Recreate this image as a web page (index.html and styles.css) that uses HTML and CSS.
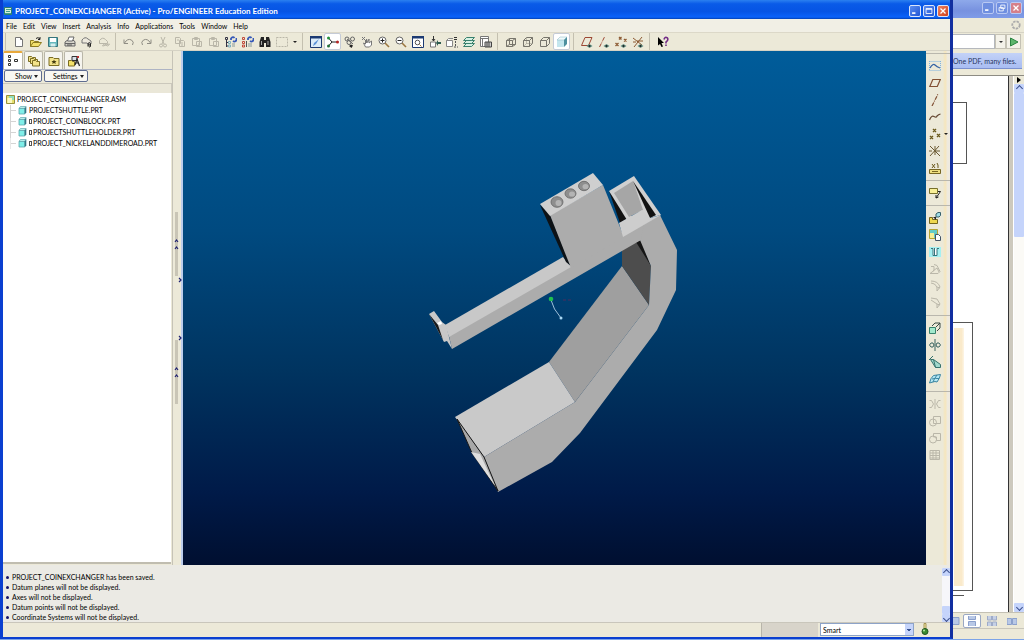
FILE: index.html
```html
<!DOCTYPE html>
<html lang="en">
<head>
<meta charset="utf-8">
<title>PROJECT_COINEXCHANGER (Active) - Pro/ENGINEER Education Edition</title>
<link rel="stylesheet" href="styles.css">
</head>
<body>
<svg class="defs" aria-hidden="true">
  <symbol id="eye" viewBox="0 0 6 4"><path class="f-teal" d="M0 2 3 0 6 2 3 4z"/><circle class="f-dark" cx="3" cy="2" r="1"/></symbol>
  <symbol id="part" viewBox="0 0 9 9"><path fill="#7feee8" stroke="#5fa9b0" stroke-width=".8" d="M1 2.500h5.500V8H1z"/><path fill="#c8fbf5" stroke="#4b99a3" stroke-width=".6" d="m1 2.300 1.500-1.800H8L6.500 2.300z"/><path fill="#2f7a88" d="M6.700 2.300 8.300.5v6L6.700 8.500z"/></symbol>
</svg>
<div class="desktop">
<main class="app">
  <header class="title">
    <svg class="logo" viewBox="0 0 8 8"><path fill="#d8f0d8" stroke="#2c7f70" d="M.5.5h7v7h-7z"/><path fill="#3f9d8c" d="M2 2h5v1H2zM2 4h4v1H2zM1 6h6v1H1z"/></svg>
    <h1>PROJECT_COINEXCHANGER (Active) - Pro/ENGINEER Education Edition</h1>
    <button class="win" aria-label="Minimize"><svg viewBox="0 0 12 12"><path d="M2.500 8.500h4" stroke-width="2"/></svg></button>
    <button class="win" aria-label="Maximize"><svg viewBox="0 0 12 12"><path d="M2.500 3h7v6h-7zM2.500 4h7"/></svg></button>
    <button class="win close" aria-label="Close"><svg viewBox="0 0 12 12"><path d="m3 3 6 6M9 3 3 9" stroke-width="1.500"/></svg></button>
  </header>
  <nav class="menu">
    <button>File</button><button>Edit</button><button>View</button><button>Insert</button><button>Analysis</button><button>Info</button><button>Applications</button><button>Tools</button><button>Window</button><button>Help</button>
  </nav>
  <div class="toolbar">
    <div class="group">
      <button class="tool" aria-label="New"><svg viewBox="0 0 12 12"><path class="w" stroke="#777" d="M2.500 1.500h5l2 2v7h-7zM7.500 1.500v2h2"/></svg></button>
      <button class="tool" aria-label="Open"><svg viewBox="0 0 12 12"><path fill="#f4e16c" stroke="#8d7b20" d="M.5 10.500V4.500h3l1 1h4v1.500M.5 10.500l2.500-4h8.500l-3 4z"/><path stroke="#222" d="M6 2.500q2-2 4 .5M10 1v2.500H8"/></svg></button>
      <button class="tool" aria-label="Save"><svg viewBox="0 0 12 12"><path fill="#66b8bd" stroke="#36747c" d="M1.500 1.500h9v9h-9z"/><path class="w" d="M3 2h6v4H3z"/><path fill="#d5eeee" d="M3.500 7.500h5v3h-5z"/></svg></button>
      <button class="tool" aria-label="Print"><svg viewBox="0 0 12 12"><path fill="#d8d6cc" stroke="#666" d="M1 6l2-1.500h7l1 1.500v4H1zM1 7.500h10"/><path class="w" stroke="#666" d="M3.500 5 5 1h5L8.500 5z"/><path stroke="#555" d="M3 9h5"/></svg></button>
      <button class="tool" aria-label="Mail"><svg viewBox="0 0 12 12"><path fill="#eeeade" stroke="#777" d="M1 7V4q3-4 6-1l3 2v3H7L6 7z"/><path stroke="#222" d="M7 10.500V7.500q1.500-2 2.500 0v3q-1 1-1.500 0V8"/></svg></button>
      <button class="tool off" aria-label="Mail link"><svg viewBox="0 0 12 12"><path d="M1.500 7.500v-3q3-4 6-1l2 2v2h-8M5 9q2-2 3 0t3 0-3 0-3 0"/></svg></button>
    </div>
    <div class="group">
      <button class="tool off dim" aria-label="Undo"><svg viewBox="0 0 12 12"><path d="M1 3.500v4h4M1.500 7q3-5 7-3 3 2 1 5"/></svg></button>
      <button class="tool off dim" aria-label="Redo"><svg viewBox="0 0 12 12"><path d="M11 3.500v4H7M10.500 7q-3-5-7-3-3 2-1 5"/></svg></button>
      <button class="tool off" aria-label="Cut"><svg viewBox="0 0 12 12"><path d="M4 1l3 7M8 1 5 8"/><circle cx="4" cy="9.500" r="1.500"/><circle cx="8" cy="9.500" r="1.500"/></svg></button>
      <button class="tool off" aria-label="Copy"><svg viewBox="0 0 12 12"><path d="M1.500 1.500h4l1 1v5h-5zM5.500 4.500h4l1 1v5h-5zM7 7h2M7 9h2M3 4h2"/></svg></button>
      <button class="tool off" aria-label="Paste"><svg viewBox="0 0 12 12"><path d="M1.500 2.500h7v7h-7zM3.500 1.500h3v2h-3zM5.500 5.500h5v5h-5zM7 8h2"/></svg></button>
      <button class="tool off" aria-label="Paste special"><svg viewBox="0 0 12 12"><path d="M1.500 2.500h7v7h-7zM3.500 1.500h3v2h-3zM5.500 5.500h5v5h-5z"/></svg></button>
      <button class="tool" aria-label="Regenerate"><svg viewBox="0 0 12 12"><path stroke="#334" d="M.5 1.500h2v2h-2zM1.500 4v7M1.500 6.500h2M1.500 10h2"/><path stroke="#7cb0c0" d="M3.500 5.500h2v2h-2zM3.500 9h2v2h-2z"/><path stroke="#3558b8" stroke-width="1.800" d="M6 4V2.500Q8 0 9.500 2M11.500 2v2Q10 6.500 8 5"/><path stroke="#8a9a9a" d="M7 8h3M7 10h3"/></svg></button>
      <button class="tool" aria-label="Regenerate manager"><svg viewBox="0 0 12 12"><path stroke="#c24a3a" d="M.5 1.500h2v2h-2zM.5 5.500h2v2h-2zM.5 9h2v2h-2z"/><path stroke="#555" d="M4.500 5v6"/><path stroke="#3558b8" stroke-width="1.800" d="M6 4V2.500Q8 0 9.500 2M11.500 2v2Q10 6.500 8 5"/><path stroke="#8a9a9a" d="M6 8h4M6 10h4"/></svg></button>
      <button class="tool" aria-label="Find"><svg viewBox="0 0 12 12"><path class="f-dark" d="M2 1h3v3h2V1h3l1.500 5v5H7V7H5v4H.5V6z"/><path stroke="#ddd" stroke-width=".7" d="M2.500 5v4M9 5v4"/></svg></button>
      <button class="tool off" aria-label="Select box"><svg viewBox="0 0 12 12"><path stroke-dasharray="2 1" d="M.5 1.500h11v9H.5z"/></svg></button>
      <button class="more" aria-label="Selection options"></button>
    </div>
    <div class="group">
      <button class="tool" aria-label="Repaint"><svg viewBox="0 0 12 12"><path fill="#dcecf8" stroke="#1c3a72" d="M.5.5h11v11H.5z"/><path fill="#1c3a72" d="M0 0h12v2.500H0z"/><path fill="#5b92d8" d="M3 10l1-3 5-4-3 5z"/></svg></button>
      <button class="tool on" aria-label="Spin center"><svg viewBox="0 0 12 12"><path stroke="#222" d="M1.500 2 5 6 1.500 10M5 6h5"/><circle fill="#24933a" cx="1.500" cy="2" r="1.500"/><circle fill="#24733a" cx="1.500" cy="10" r="1.500"/><circle fill="#b62424" cx="10.500" cy="6" r="1.500"/></svg></button>
      <button class="tool" aria-label="Orient mode"><svg viewBox="0 0 12 12"><g stroke="#666"><circle cx="3" cy="3" r="2"/><circle cx="8.500" cy="3" r="2"/><circle cx="5" cy="6.500" r="2"/><path d="M3 3l6 5"/></g><path class="f-dark" d="M5 10l2-1.500 2 1L7.500 12z"/></svg></button>
      <button class="tool" aria-label="Pan"><svg viewBox="0 0 12 12"><path stroke="#777" d="M1 1l3 3M1 4l3-3"/><path fill="#fff" stroke="#777" d="M4.500 11 2.500 7l2 1V4l1 3V3l1 3.500L8 3v4l2.500-2v4l-2 2z"/></svg></button>
      <button class="tool" aria-label="Zoom in"><svg viewBox="0 0 12 12"><circle class="w" stroke="#666" cx="4.500" cy="4.500" r="3.500"/><path stroke="#222" d="M2.500 4.500h4M4.500 2.500v4"/><path stroke="#9b7740" stroke-width="1.600" d="m7 7 4 4"/></svg></button>
      <button class="tool" aria-label="Zoom out"><svg viewBox="0 0 12 12"><circle class="w" stroke="#666" cx="4.500" cy="4.500" r="3.500"/><path stroke="#222" d="M2.500 4.500h4"/><path stroke="#9b7740" stroke-width="1.600" d="m7 7 4 4"/></svg></button>
      <button class="tool" aria-label="Refit"><svg viewBox="0 0 12 12"><path class="w" stroke="#1c3a72" d="M.5.5h11v11H.5z"/><path fill="#1c3a72" d="M0 0h12v2.500H0z"/><circle stroke="#555" cx="5.500" cy="6.500" r="2.300"/><path stroke="#9b7740" d="m7.500 8.500 2 2"/></svg></button>
      <button class="tool" aria-label="Reorient"><svg viewBox="0 0 12 12"><path stroke="#333" d="M4.500 0v5M3 3l1.500 2L6 3"/><path class="w" stroke="#777" d="M1.500 6h5v5h-5z"/><path fill="#2e5c50" d="M7 7l2-3v2h3v2H9v2z"/></svg></button>
      <button class="tool" aria-label="Saved views"><svg viewBox="0 0 12 12"><path class="w" stroke="#888" d="M.5 4.500h6v6h-6zM.5 4.500l2-2H7"/><path stroke="#333" d="M8 1.500h3M8 3.500h3"/><path stroke="#555" stroke-dasharray="2 1" d="M9.500 5v5M8 11h4"/></svg></button>
      <button class="tool" aria-label="Layers"><svg viewBox="0 0 12 12"><g fill="#d5f0e2" stroke="#39806d"><path d="M.5 10.500l3-3h8l-3 3z"/><path d="M.5 7.500l3-3h8l-3 3z"/><path d="M.5 4.500l3-3h8l-3 3z"/></g></svg></button>
      <button class="tool" aria-label="View manager"><svg viewBox="0 0 12 12"><path class="w" stroke="#777" d="M.5.5h8v10h-8zM.5 2.500h8M2.500 2.500v8"/><path fill="#ccc" stroke="#444" d="M5 6h6.500v5H5zM7 6v5M9 6v5"/></svg></button>
    </div>
    <div class="group">
      <button class="tool" aria-label="Wireframe"><svg class="cube" viewBox="0 0 12 12"><path d="M1.500 4.500h6v6h-6zM4.500 2.500h6v6h-6zM1.500 4.500l3-2M7.500 4.500l3-2M7.500 10.500l3-2M1.500 10.500l3-2"/></svg></button>
      <button class="tool" aria-label="Hidden line"><svg class="cube" viewBox="0 0 12 12"><path d="M1.500 4.500h6v6h-6zM1.500 4.500l3-3h6l-3 3M10.500 1.500v6l-3 3"/><path opacity=".4" d="M4.500 2v5.500H10M1.500 10.500l3-3"/></svg></button>
      <button class="tool" aria-label="No hidden"><svg class="cube" viewBox="0 0 12 12"><path d="M1.500 4.500h6v6h-6zM1.500 4.500l3-3h6l-3 3M10.500 1.500v6l-3 3"/></svg></button>
      <button class="tool on" aria-label="Shading"><svg viewBox="0 0 12 12"><path fill="#c4e6ee" d="M1 4h7v7H1z"/><path fill="#eefafc" stroke="#89b6c0" stroke-width=".5" d="m1 4 3-3h7L8 4z"/><path fill="#4c8f9e" d="m8 4 3-3v7l-3 3z"/></svg></button>
    </div>
    <div class="group">
      <button class="tool" aria-label="Planes on"><svg viewBox="0 0 12 12"><path stroke="#9c4733" d="M.5 9.500l3.500-8h7l-3.500 8z"/><use href="#eye" x="5" y="8" width="7" height="4"/></svg></button>
      <button class="tool" aria-label="Axes on"><svg viewBox="0 0 12 12"><path stroke="#9c4733" stroke-dasharray="4 1 1 1" d="M1.500 11 6.500 1"/><use href="#eye" x="5" y="8" width="7" height="4"/></svg></button>
      <button class="tool" aria-label="Points on"><svg viewBox="0 0 12 12"><path stroke="#8c5a33" stroke-width="1.300" d="M4 1l2.500 2.500M6.500 1 4 3.500M9 3l2.500 2.500M11.500 3 9 5.500M.5 7l3 3M3.500 7l-3 3"/><use href="#eye" x="5" y="8" width="7" height="4"/></svg></button>
      <button class="tool" aria-label="Coordinate systems on"><svg viewBox="0 0 12 12"><path stroke="#8c5a33" d="M1 2l9 7M10 1 2 11M5 5h6M1 6h3"/><use href="#eye" x="5" y="8" width="7" height="4"/></svg></button>
    </div>
    <div class="group">
      <button class="tool" aria-label="Context help"><svg viewBox="0 0 12 12"><path fill="#000" d="M1 1l6 6H4.500L6 10.500 4.500 11 3 8 1 9.500z"/><path stroke="#722b86" stroke-width="1.600" d="M7 3.500Q7.500 1 9.500 1.500t1 3L9 6v1.500M9 8.500V10"/></svg></button>
    </div>
  </div>

  <div class="work">
    <aside class="panel">
      <div class="tabs">
        <button class="tab active" aria-label="Model tree"><svg viewBox="0 0 12 12"><path class="w" stroke="#333" d="M1.500.5h2v2h-2zM1.500 4.500h2v2h-2zM1.500 8.500h2v2h-2zM7.500 4.500h3v2h-3z"/></svg></button>
        <button class="tab" aria-label="Folder browser"><svg viewBox="0 0 12 12"><g fill="#f3e38a" stroke="#7b6d24"><path d="M.5 1.500h3l1 1h3v4h-7z"/><path d="M2.500 3.500h3l1 1h3v4h-7z"/><path d="M4.500 5.500h3l1 1h3v4.500h-7z"/></g></svg></button>
        <button class="tab" aria-label="Favorites"><svg viewBox="0 0 12 12"><path fill="#f3e38a" stroke="#7b6d24" d="M1 2.500h4l1 1h5v7H1z"/><path fill="#443c10" d="M6 4.500l.7 1.500H8.500L7.300 7.300l.4 1.700L6 8l-1.700 1 .4-1.700L3.500 6h1.800z"/></svg></button>
        <button class="tab" aria-label="Connections"><svg viewBox="0 0 12 12"><path fill="#d8e0e8" stroke="#333" d="M4 1.500h5v4H4z"/><path fill="#f3e16a" stroke="#7b6d24" d="M.5 5.500h3l1 1h2v4.500h-6z"/><path stroke="#222" stroke-width="1.200" d="M7 10l2-6 2.500 7M8 8h3"/><path fill="#b33" d="M9 1h2v2H9z"/></svg></button>
      </div>
      <div class="actions"><button>Show <i class="caret"></i></button><button>Settings <i class="caret"></i></button></div>
      <div class="strip"></div>
      <div class="tree">
        <div class="root"><svg viewBox="0 0 9 9"><path fill="#e5df6d" stroke="#96903e" d="M.5.5h8v8h-8z"/><path fill="#8fe0c0" d="M3 1h5v4H3z"/><path fill="#fbf8c0" d="M1.500 3h4.500v5H1.500z"/></svg>PROJECT_COINEXCHANGER.ASM</div>
        <ul>
          <li><svg><use href="#part"/></svg>PROJECTSHUTTLE.PRT</li>
          <li><svg><use href="#part"/></svg><i class="pack"></i>PROJECT_COINBLOCK.PRT</li>
          <li><svg><use href="#part"/></svg><i class="pack"></i>PROJECTSHUTTLEHOLDER.PRT</li>
          <li><svg><use href="#part"/></svg><i class="pack"></i>PROJECT_NICKELANDDIMEROAD.PRT</li>
        </ul>
      </div>
    </aside>
    <div class="split">
      <svg viewBox="0 0 8 192"><path fill="#c9c5b6" d="M1 0h3v64H1zM1 128h3v64H1z"/><path stroke="#1d2070" stroke-width="1.200" d="m1 30 1.500-2L4 30M1 37l1.500-2L4 37M1 158l1.500-2L4 158M1 165l1.500-2L4 165M5 66l2 2-2 2M5 124l2 2-2 2"/></svg>
    </div>
    <section class="view">
      <svg viewBox="183 51 743 514" role="img" aria-label="Coin exchanger assembly">
        <path fill="#9f9f9f" d="M549 362 622 266 649 305 575 402z"/>
        <path fill="#4d4d4d" d="M622 248 640 240 651 266 649 305 622 266z"/>
        <path fill="#151515" d="M636 242 641 240 651 266z"/>
        <path fill="#acacac" d="M619 238 660 215 677 250 676 290 657 330 580 433 552 462 498 492 484 457 575 402 649 305 651 266 640 240 623 249z"/>
        <path fill="#c9c9c9" d="M455 417 549 362 575 402 484 457z"/>
        <path fill="#a8a8a8" stroke="#171717" d="M457 419 484 457 498 491 472 453z"/>
        <path fill="#dedede" d="M471 452 480 454 495 486z"/>
        <path fill="#acacac" d="M449 336 571 264 623 232 644 223 641 240 452 349z"/>
        <path fill="#c8c8c8" d="M445 325 563 257 571 267 449 337z"/>
        <path fill="#0d1216" d="M540 205 550 214 571 266 566 262z"/>
        <path fill="#acacac" d="M550 215 603 185 624 237 571 268z"/>
        <path fill="#cfcfcf" d="M540 204 593 173 603 185 550 216z"/>
        <g fill="#8e8e8e" stroke="#666" stroke-width=".8"><ellipse cx="557" cy="202" rx="6" ry="5.300"/><ellipse cx="570.500" cy="193.500" rx="5.500" ry="4.700"/><ellipse cx="584" cy="186" rx="5.500" ry="4.700"/></g>
        <g fill="#b4b4b4"><ellipse cx="558.500" cy="203" rx="3" ry="3"/><ellipse cx="572" cy="194" rx="3" ry="2.600"/><ellipse cx="585.500" cy="186.500" rx="3" ry="2.600"/></g>
        <path fill="#d0d0d0" d="M609 191 634 176 661 215 649 218z"/>
        <path fill="#121212" d="M609 191 628 218 620 223z"/>
        <path fill="#d0d0d0" d="M609 191 615 192 632 217 627 220z"/>
        <path fill="#a6a6a6" d="M614 193 633 181 643 210 629 217z"/>
        <path fill="#111" d="M633 181 656 215 650 218z"/>
        <path fill="#cdcdcd" d="M619 223 642 210 650 218 661 215 623 237z"/>
        <path fill="#c8c8c8" d="M429 314 434 311 442 322 446 325 449 337 452 349 447 341 444 342z"/>
        <path fill="#17191b" d="M429 314 438 325 443 340z"/><path fill="#fff" d="M437 323 441 321 442 324 439 325z"/>
        <path stroke="#9fc0da" d="M551 300q2 9 10 18"/><path stroke="#4c2c5c" stroke-dasharray="3 2" d="M563 300h8"/>
        <circle fill="#20c050" cx="551" cy="299" r="2.300"/><circle fill="#a8d8f4" cx="561" cy="318" r="1.500"/>
      </svg>
    </section>
    <div class="side">
      <div class="vgroup">
        <button class="tool" aria-label="Sketch"><svg viewBox="0 0 12 12"><path stroke="#7eb3e0" stroke-dasharray="1 1" d="M.5 1.500h11M.5 10.500h11M.5 1v10M11.500 1v10"/><path stroke="#3563a4" stroke-width="1.300" d="M1 8q3-5 5-3t5 3"/></svg></button>
        <button class="tool" aria-label="Plane"><svg viewBox="0 0 12 12"><path stroke="#815033" stroke-width="1.200" d="M.8 9.500l3-7h7.500l-3 7z"/></svg></button>
        <button class="tool" aria-label="Axis"><svg viewBox="0 0 12 12"><path stroke="#815033" stroke-width="1.200" stroke-dasharray="4 1 1 1" d="M3 12 9 0"/></svg></button>
        <button class="tool" aria-label="Curve"><svg viewBox="0 0 12 12"><path stroke="#654832" stroke-width="1.200" d="M.5 9q2-5 4.500-3.500T8 5q1.500-1.500 3.500-2"/></svg></button>
        <div class="row"><button class="tool" aria-label="Point"><svg viewBox="0 0 12 12"><path stroke="#6b5a1d" stroke-width="1.400" d="M4 1l3 3M7 1 4 4M1 8l3 3M4 8l-3 3M8 6l3 3M11 6 8 9"/></svg></button><button class="fly" aria-label="Point types"></button></div>
        <button class="tool" aria-label="Coordinate system"><svg viewBox="0 0 12 12"><path stroke="#6b5a33" d="M1 1l10 10M10 1 1 11M6 1v9M5 6h6M0 6h3"/></svg></button>
        <button class="tool" aria-label="Analysis feature"><svg viewBox="0 0 12 12"><path fill="#efdf80" stroke="#776723" d="M.5 7.500h11v4H.5zM3 9.500h6"/><path stroke="#6b5a1d" d="M3 2l3 4M6 2 3 6M8 1l1 2v3"/></svg></button>
      </div>
      <div class="vgroup">
        <button class="tool" aria-label="Annotation"><svg viewBox="0 0 12 12"><path fill="#f8ef96" stroke="#77702b" d="M.5 1.500h8v5h-8z"/><path stroke="#222" d="M9 4.500h2.500L7 11M7 8v3l2.500-1"/></svg></button>
      </div>
      <div class="vgroup">
        <button class="tool" aria-label="Assemble"><svg viewBox="0 0 12 12"><path fill="#efd84f" stroke="#75661c" d="M.5 5.500h3v2h5v4h-8z"/><path fill="#9fdce5" stroke="#37606b" d="M7 2l2-1.500h2.500v3L10 5H7z"/><path class="f-dark" d="M4 5h3v3z"/></svg></button>
        <button class="tool" aria-label="Create component"><svg viewBox="0 0 12 12"><path fill="#65cbc8" stroke="#b5a433" d="M.5.5h8v9h-8z"/><path fill="#f8ef96" d="M1 4h4v5H1z"/><path class="w" stroke="#456" d="M6.500 5.500h3l2 2v4h-5z"/></svg></button>
        <button class="tool" aria-label="Hole"><svg viewBox="0 0 12 12"><path fill="#a5f0f0" d="M0 1h12v10H0z"/><path class="w" stroke="#36747c" d="M2 2.500h2v7h4v-7h2M5.500 2v7"/></svg></button>
        <button class="tool off" aria-label="Shell"><svg viewBox="0 0 12 12"><path d="M1 10.500h8l2-2-3-6-3-1M1 10.500l4-3V3.500H2M4 8l4-3 2 4"/></svg></button>
        <button class="tool off" aria-label="Round"><svg viewBox="0 0 12 12"><path d="M2 1q7 0 9 6l-3 4q1-7-6-8M8 7l3 1"/></svg></button>
        <button class="tool off" aria-label="Chamfer"><svg viewBox="0 0 12 12"><path d="M2 1l6 1 3 5-3 4V7L2 3M8 7l3 1"/></svg></button>
      </div>
      <div class="vgroup">
        <button class="tool" aria-label="Extrude"><svg viewBox="0 0 12 12"><path fill="#a2e9cc" stroke="#37826c" d="M.5 5.500h6v6h-6z"/><path stroke="#3a4a45" d="M3 4l3-3h5v5L8 9M7 5l4-4"/></svg></button>
        <button class="tool" aria-label="Revolve"><svg viewBox="0 0 12 12"><path stroke="#3a6460" d="M6 0v12M4 4H2L.5 6 2 8h2l1-2zM8 4h2l1.500 2L10 8H8L7 6z"/></svg></button>
        <button class="tool" aria-label="Sweep"><svg viewBox="0 0 12 12"><path fill="#a2d9cc" stroke="#37726c" d="M1.500 3.500h3l7 5v3h-5z"/><path stroke="#37726c" d="M0 4l4-4M4.500 3.500l2 8"/></svg></button>
        <button class="tool" aria-label="Boundary blend"><svg viewBox="0 0 12 12"><path fill="#b6e8f5" stroke="#3985a1" d="M.5 10q1-5 4-7.500l7-1Q11 5 8 9q-2-1-4 0zM3 6q3-1 7-.5M8 2Q5 6 4 9"/></svg></button>
      </div>
      <div class="vgroup">
        <button class="tool off" aria-label="Mirror"><svg viewBox="0 0 12 12"><path d="M6 1v10M.5 2.500h2l2 3.500-2 3.500h-2M11.500 2.500h-2L7.500 6l2 3.500h2"/></svg></button>
        <button class="tool off" aria-label="Merge"><svg viewBox="0 0 12 12"><circle cx="4" cy="7.500" r="3.500"/><path d="M4.500 1.500h7v7h-7z"/></svg></button>
        <button class="tool off" aria-label="Trim"><svg viewBox="0 0 12 12"><circle cx="4" cy="7.500" r="3.500"/><path d="M4.500 1.500h7v7h-4V5h-3z"/></svg></button>
        <button class="tool off" aria-label="Pattern"><svg viewBox="0 0 12 12"><path d="M1 1.500h9.500v9H1zM1 4h9M1 6.500h9M1 9h9M4 2v9M7 2v9"/></svg></button>
      </div>
    </div>
  </div>

  <div class="messages">
    <ul>
      <li>PROJECT_COINEXCHANGER has been saved.</li>
      <li>Datum planes will not be displayed.</li>
      <li>Axes will not be displayed.</li>
      <li>Datum points will not be displayed.</li>
      <li>Coordinate Systems will not be displayed.</li>
    </ul>
    <div class="scroll"><button class="arrow up" aria-label="Scroll up"></button><span class="space"></span><span class="thumb"></span><button class="arrow down" aria-label="Scroll down"></button></div>
  </div>
  <footer class="status">
    <span class="cell"></span>
    <select aria-label="Selection filter"><option>Smart</option></select>
    <svg class="light" viewBox="0 0 8 13"><path stroke="#a79655" fill="#efe6a5" d="M3 .5h2v5H3z"/><circle fill="#3c8b30" stroke="#1f5520" cx="4" cy="8.500" r="3"/><circle fill="#b2eba0" cx="3" cy="7.500" r="1"/></svg>
  </footer>
</main>

<aside class="reader">
  <header class="title">
    <button class="win" aria-label="Minimize reader"><svg viewBox="0 0 12 12"><path d="M2.500 8.500h4" stroke-width="2"/></svg></button>
    <button class="win" aria-label="Restore reader"><svg viewBox="0 0 12 12"><path d="M4.500 2.500h5v4h-5zM2.500 5.500h5v4h-5z"/></svg></button>
    <button class="win close" aria-label="Close reader"><svg viewBox="0 0 12 12"><path d="m3 3 6 6M9 3 3 9" stroke-width="1.500"/></svg></button>
  </header>
  <div class="rmenu"><svg viewBox="0 0 10 10"><circle stroke="#aaa" stroke-width="1.800" stroke-dasharray="2.500 1" cx="5" cy="5" r="3.700"/></svg></div>
  <div class="address"><input type="text" aria-label="Address"><button class="drop" aria-label="Address list"></button><button class="go" aria-label="Go"><svg viewBox="0 0 10 10"><path fill="#5db66c" stroke="#2b8441" d="M1.500 1 9 5 1.500 9z"/></svg></button></div>
  <div class="banner"><a href="#pdf">One PDF, many files.</a></div>
  <div class="doc">
    <div class="page"><div class="frame"></div><div class="figure"><div class="tint"></div></div><div class="rule"></div></div>
    <div class="rscroll"><button class="flag" aria-label="Expand"></button><button class="arrow up" aria-label="Page up"></button><span class="thumb"></span><span class="space"></span><button class="arrow down" aria-label="Page down"></button></div>
  </div>
  <div class="layouts">
    <button class="cut" aria-label="Single page"><svg viewBox="0 0 10 10"><path fill="#b8c8e6" stroke="#8ba0cc" d="M-3 1.500h9v7h-9z"/></svg></button>
    <button class="sel" aria-label="Continuous"><svg viewBox="0 0 10 10"><path fill="#b8c8e6" stroke="#8ba0cc" d="M1.500 0v3.500h7V0M1.500 10V5.500h7V10"/></svg></button>
    <button aria-label="Continuous facing"><svg viewBox="0 0 10 10"><path fill="#c5d0e6" stroke="#9eabc8" d="M.5 0v4h4V0M5.500 0v4h4V0M.5 10V6h4v4M5.500 10V6h4v4"/></svg></button>
    <button aria-label="Facing"><svg viewBox="0 0 10 10"><path fill="#b8c8e6" stroke="#8ba0cc" d="M0 2.500h4.500v6H0zM5.500 2.500H10v6H5.500z"/></svg></button>
  </div>
  <div class="rstatus"></div>
</aside>
</div>
</body>
</html>
```
FILE: styles.css
```css
* { box-sizing: border-box; }
body { margin: 0; background: #ece9d8; color: #000; font: 7px/10px Lato, "Liberation Sans", sans-serif; }
button { margin: 0; padding: 0; border: 0; background: none; color: inherit; font: inherit; }
ul { margin: 0; padding: 0; list-style: none; }
svg { display: block; fill: none; }
.defs { position: absolute; width: 0; height: 0; }
.w { fill: #fff; }
.f-dark { fill: #222; }
.f-teal { fill: #5f8f84; }

.desktop { display: flex; height: 100vh; border-bottom: 1px solid #7ca4e8; }
.app { display: flex; flex-direction: column; flex: 1; min-width: 0; background: #ece9d8; border: 3px solid #0a3fd0; border-top: 0; border-bottom-width: 2px; border-right-color: #122fa0; }

.title { display: flex; align-items: center; gap: 2px; flex: none; height: 19px; padding: 2px 1px 0 1px; background: linear-gradient(#2b80f0, #0a5be8 20%, #0654e4 60%, #0a62fa 90%, #0340b4); color: #fff; }
.logo { width: 8px; height: 8px; margin: 0 1px 0 0; }
h1 { flex: 1; margin: 0; font-size: 8px; line-height: 10px; font-weight: bold; white-space: nowrap; }
.win { width: 12px; height: 12px; border: 1px solid #dbe6fb; border-radius: 2px; background: linear-gradient(135deg, #5b8df0, #2256d4); }
.win svg { width: 10px; height: 10px; stroke: #fff; }
.win.close { background: linear-gradient(135deg, #ec8462, #d0401c); }

.menu { display: flex; gap: 6px; flex: none; height: 14px; padding: 1px 3px; background: #f1efe5; border-bottom: 1px solid #dcd8c8; }
.toolbar { display: flex; flex: none; height: 18px; padding-left: 2px; border-bottom: 1px solid #d5d2c4; }
.group { display: flex; align-items: center; padding: 0 3px 0 4px; border-left: 1px solid #c4c0b0; }
.tool { display: grid; place-items: center; flex: none; width: 17px; height: 17px; border: 1px solid transparent; }
.tool svg { width: 12px; height: 12px; }
.toolbar .on { background: #fff; border-color: #c5cbd6; border-radius: 2px; }
.off svg { stroke: #bab7a9; }
.dim svg { stroke: #8f8d84; }
.cube { stroke: #77756c; }
.more { width: 9px; height: 17px; display: grid; place-items: center; }
.more::before { content: ""; border: 2px solid transparent; border-top-color: #222; border-bottom: 0; }

.work { display: flex; flex: 1; min-height: 0; }
.panel { display: flex; flex-direction: column; flex: none; width: 170px; padding-bottom: 1px; border-right: 1px solid #c6c3b7; }
.tabs { display: flex; gap: 1px; height: 18px; }
.tab { display: grid; place-items: center; width: 19px; height: 18px; border: 1px solid #b9b6a8; border-bottom: 0; background: #f5f4ee; border-radius: 2px 2px 0 0; }
.tab svg { width: 12px; height: 12px; }
.tab.active { width: 20px; border-top: 2px solid #e8a83c; background: #fff; }
.actions { display: flex; gap: 2px; height: 14px; padding: 0 1px; border-top: 1px solid #aeb4c4; }
.actions button { display: flex; align-items: center; justify-content: flex-end; gap: 2px; height: 12px; padding: 0 3px 0 8px; border: 1px solid #5e6c90; border-radius: 2px; background: #f8f7f2; }
.actions button:first-child { padding-left: 10px; }
.caret { border: 2px solid transparent; border-top: 3px solid #222; border-bottom: 0; }
.strip { height: 10px; border: 1px solid #cbc8bc; border-left: 0; border-bottom: 0; background: #eae7d8; }
.tree { flex: 1; margin-right: 1px; padding: 1px 3px 0; background: #fff; border-bottom: 2px solid #c0bdb0; white-space: nowrap; line-height: 11px; }
.root, .tree li { display: flex; align-items: center; height: 11px; }
.tree svg { flex: none; width: 9px; height: 9px; margin-right: 2px; }
.tree ul { margin-left: 4px; }
.tree li { border-left: 1px solid #d4d4d4; }
.tree li:last-child { border-left-color: #e8e8e8; }
.tree li::before { content: ""; flex: none; width: 5px; margin-right: 2px; border-top: 1px solid #d4d4d4; }
.pack { flex: none; width: 3px; height: 5px; margin-right: 1px; border: 1px solid #555; }
.split { display: flex; align-items: center; flex: none; width: 10px; padding-left: 1px; background: #ece9d8; border-right: 2px solid #bccdec; }
.split svg { width: 8px; height: 192px; flex: none; }
.view { flex: 1; min-width: 0; background: linear-gradient(#005c9a, #004a80 35%, #003460 62%, #001a48 86%, #000f30); }
.view svg { width: 100%; height: 100%; }
.side { flex: none; width: 24px; padding-top: 2px; background: linear-gradient(90deg, #ece9d8 70%, #f6e6bc 80%, #eeeadf 90%); }
.vgroup { padding: 3px 0 4px; border-top: 1px solid #b9b7ad; }
.row { display: flex; align-items: center; }
.fly { margin-left: 1px; border: 2px solid transparent; border-top-color: #222; border-bottom: 0; }

.messages { display: flex; flex: none; background: #ebeae4; border-bottom: 1px solid #c9c6bb; }
.messages ul { flex: 1; padding: 7px 3px 0; }
.messages li { display: flex; align-items: center; gap: 3px; height: 10px; }
.messages li::before { content: ""; width: 3px; height: 3px; border-radius: 50%; background: #16166c; }
.scroll, .rscroll { display: flex; flex-direction: column; width: 8px; background: #f6f6fa; }
.scroll { margin-top: 3px; }
.space { flex: 1; }
.thumb { flex: none; height: 8px; background: #c5d4fb; border-radius: 1px; }
.arrow { display: grid; place-items: center; flex: none; height: 8px; background: #c5d4fb; border-radius: 1px; }
.arrow::before { content: ""; width: 4px; height: 4px; border: solid #3b4f8c; border-width: 1px 0 0 1px; transform: rotate(45deg); }
.arrow.down::before { transform: rotate(225deg); }

.status { display: flex; align-items: stretch; justify-content: flex-end; gap: 2px; flex: none; height: 14px; padding-right: 21px; }
.cell { width: 57px; background: #d8d4ca; border-left: 1px solid #b8b5aa; }
.status select { appearance: none; width: 94px; height: 13px; padding: 0 2px; border: 1px solid #8da3c8; border-radius: 0; color: #000; font: inherit; background: linear-gradient(45deg, transparent 50%, #35508f 50%) 86px 5px / 2px 3px no-repeat, linear-gradient(-45deg, transparent 50%, #35508f 50%) 88px 5px / 2px 3px no-repeat, linear-gradient(90deg, #fff 84px, #c5d4fb 84px); }
.light { width: 8px; height: 13px; margin-left: 5px; }

.reader { display: flex; flex-direction: column; flex: none; width: 71px; background: #ece9d8; overflow: hidden; }
.reader .title { justify-content: flex-end; height: 18px; padding: 0 2px 2px 0; background: linear-gradient(#8ea9ea, #7791df 60%, #7f9ce8); }
.reader .win { background: #6f8fe0; border-color: #b9c9f3; }
.reader .win.close { background: #d5808a; }
.rmenu { display: flex; justify-content: flex-end; align-items: center; height: 15px; padding-right: 3px; border-bottom: 1px solid #d6d3c5; }
.rmenu svg { width: 10px; height: 10px; }
.address { display: flex; height: 15px; margin-top: 1px; padding-right: 3px; }
.address input { flex: 1; min-width: 0; border: 1px solid #b5b8bd; border-left: 0; background: #fff; }
.address button { display: grid; place-items: center; border: 1px solid #c5c2b5; background: #f4f2e9; }
.drop { width: 11px; }
.drop::before { content: ""; border: 2px solid transparent; border-top-color: #333; border-bottom: 0; }
.go { width: 15px; }
.go svg { width: 10px; height: 10px; }
.banner { display: flex; align-items: center; height: 16px; margin: 4px 2px 6px 0; background: linear-gradient(#c3d2f7, #a9bdf2); border-bottom: 1px solid #7c91cf; white-space: nowrap; }
.banner a { color: #26355f; text-decoration: none; }
.doc { display: flex; flex: 1; min-height: 0; border-top: 1px solid #8d8b83; background: #fff; }
.page { display: flex; flex-direction: column; flex: 1; padding: 26px 0 16px; border-right: 1px solid #333; box-shadow: 4px 0 #cdc9bd; margin-right: 5px; }
.frame { flex: none; width: 14px; height: 62px; border: 1px solid #555; border-left: 0; }
.figure { flex: 1; width: 20px; margin-top: 158px; padding: 5px 0 4px 1px; border: 1px solid #555; border-left: 0; }
.tint { width: 10px; height: 100%; background: linear-gradient(90deg, #faeacb 75%, #fdf5e6); }
.rule { width: 11px; margin-top: 4px; border-top: 1px solid #555; }
.rscroll { width: 10px; background: #fbfaf6; }
.flag { display: grid; place-items: center; height: 8px; background: #ece9d8; }
.flag::before { content: ""; border: 3px solid transparent; border-left: 4px solid #000; border-right: 0; }
.rscroll .thumb { height: 144px; }
.rscroll .arrow { height: 9px; }
.layouts { display: flex; align-items: center; gap: 2px; flex: none; height: 16px; border-top: 1px solid #c4c1b4; }
.layouts button { display: grid; place-items: center; width: 18px; height: 14px; }
.layouts .cut { width: 8px; }
.layouts svg { width: 10px; height: 10px; }
.layouts .sel { background: #fff; border: 1px solid #9aa8c4; border-radius: 2px; }
.rstatus { flex: none; height: 11px; border-top: 1px solid #c9c6bb; }
```
